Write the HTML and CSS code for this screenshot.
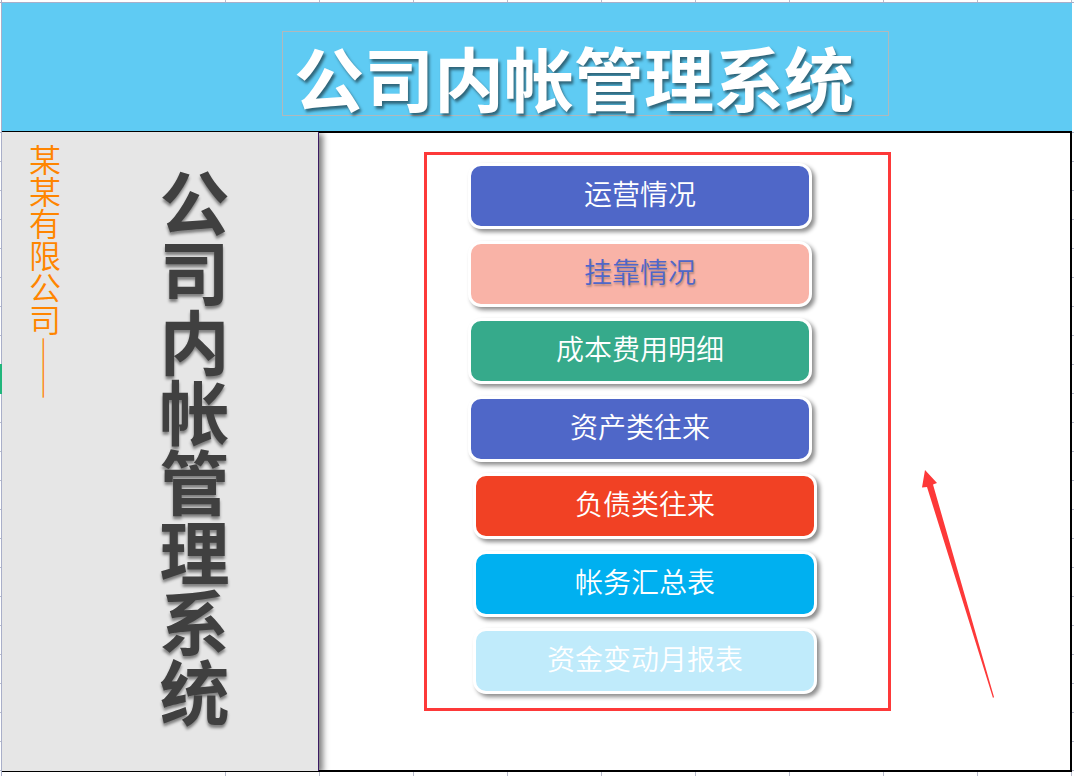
FILE: index.html
```html
<!DOCTYPE html>
<html lang="zh-CN">
<head>
    <meta charset="UTF-8">
    <meta name="viewport" content="width=device-width, initial-scale=1.0">
    <title>公司内帐管理系统</title>
    <link rel="stylesheet" href="styles.css">
</head>
<body>

    <header class="banner">
        <h1 class="banner-title">公司内帐管理系统</h1>
    </header>

    <div class="board">
        <aside class="sidebar">
            <p class="company">某某有限公司——</p>
            <h2 class="side-title">公司内帐管理系统</h2>
        </aside>

        <main class="content">
            <nav class="menu">
                <button type="button" class="menu-btn blue">运营情况</button>
                <button type="button" class="menu-btn pink">挂靠情况</button>
                <button type="button" class="menu-btn green">成本费用明细</button>
                <button type="button" class="menu-btn blue">资产类往来</button>
                <button type="button" class="menu-btn red indent">负债类往来</button>
                <button type="button" class="menu-btn sky indent">帐务汇总表</button>
                <button type="button" class="menu-btn pale indent">资金变动月报表</button>
            </nav>

            <svg class="arrow" width="74" height="230" viewBox="0 0 74 230" aria-hidden="true">
                <path d="M3 0 L15 13 L11 14.500 L72 227 L71 228 L5 17 L0 17.500 Z" fill="#fd3939"/>
            </svg>
        </main>
    </div>

</body>
</html>
```

FILE: styles.css
```css
* {
    box-sizing: border-box;
}

/* sheet grid lines show around the board */
body {
    margin: 0;
    min-height: 100vh;
    padding: 3px 2px 4px;
    display: flex;
    flex-direction: column;
    font-family: "Noto Sans CJK SC", sans-serif;
    background-color: #fff;
    background-image:
        linear-gradient(#21b67c, #21b67c),
        linear-gradient(#a9afc9, #a9afc9),
        linear-gradient(#a9afc9, #a9afc9),
        repeating-linear-gradient(to right, #b9bccd 0, #b9bccd 1px, transparent 1px, transparent 94px),
        repeating-linear-gradient(to bottom, #b9bccd 0, #b9bccd 1px, transparent 1px, transparent 29px);
    background-size: 2px 30px, 1px 100%, 100% 1px, 100% 100%, 100% 100%;
    background-position: 0 364px, 1px 0, 0 2px, 225px 0, 0 132px;
    background-repeat: no-repeat;
}

.banner {
    background-color: #5fcbf3;
    padding: 28px 183px 15px 280px;
}

.banner-title {
    margin: 0;
    height: 85px;
    padding: 3px 0 0 11px;
    border: 1px solid #b0b8bc;
    color: #fff;
    font-size: 70px;
    line-height: 84px;
    white-space: nowrap;
    text-shadow: 2px 3px 3px rgba(0, 0, 0, 0.5);
}

.board {
    flex: 1;
    display: flex;
    background-color: #fff;
    border: 2px solid #000;
    border-left: none;
}

.sidebar {
    flex: none;
    width: 317px;
    margin: -1px 0;
    padding: 12px 0 0 25px;
    display: flex;
    align-items: flex-start;
    background-color: #e6e6e6;
    border-right: 1px solid #3b1a63;
    box-shadow: 4px 2px 6px rgba(0, 0, 0, 0.5);
    clip-path: inset(0 -12px 0 0);
}

.company,
.side-title {
    margin: 0;
    writing-mode: vertical-rl;
    white-space: nowrap;
}

.company {
    color: #ff8500;
    font-size: 32px;
    font-weight: 350;
    line-height: 36px;
}

.side-title {
    margin: 24px 0 0 89px;
    color: #404040;
    font-size: 70px;
    line-height: 84px;
    text-shadow: 0 3px 3px rgba(0, 0, 0, 0.45);
}

.content {
    flex: 1;
    display: flex;
    align-items: flex-start;
    gap: 31px;
    padding: 19px 0 0 105px;
}

.menu {
    width: 467px;
    height: 559px;
    padding: 8px 41px 14px;
    display: flex;
    flex-direction: column;
    justify-content: space-between;
    border: 3px solid #fd3939;
}

.menu-btn {
    width: 344px;
    height: 66px;
    padding: 0 0 6px;
    border: 3px solid #fff;
    border-radius: 13px;
    color: #fff;
    font-family: inherit;
    font-size: 28px;
    font-weight: 350;
    line-height: 40px;
    box-shadow: 3px 3px 4px rgba(0, 0, 0, 0.45);
    cursor: pointer;
}

.indent {
    margin-left: 5px;
}

.blue {
    background-color: #4f67c8;
}

.pink {
    background-color: #f9b3a7;
    color: #4f67c8;
    text-shadow: 1px 2px 2px rgba(0, 0, 0, 0.25);
}

.green {
    background-color: #36aa8b;
}

.red {
    background-color: #f14124;
}

.sky {
    background-color: #00b0f0;
}

.pale {
    background-color: #c0ebfb;
}

.arrow {
    flex: none;
    margin-top: 318px;
}
```
